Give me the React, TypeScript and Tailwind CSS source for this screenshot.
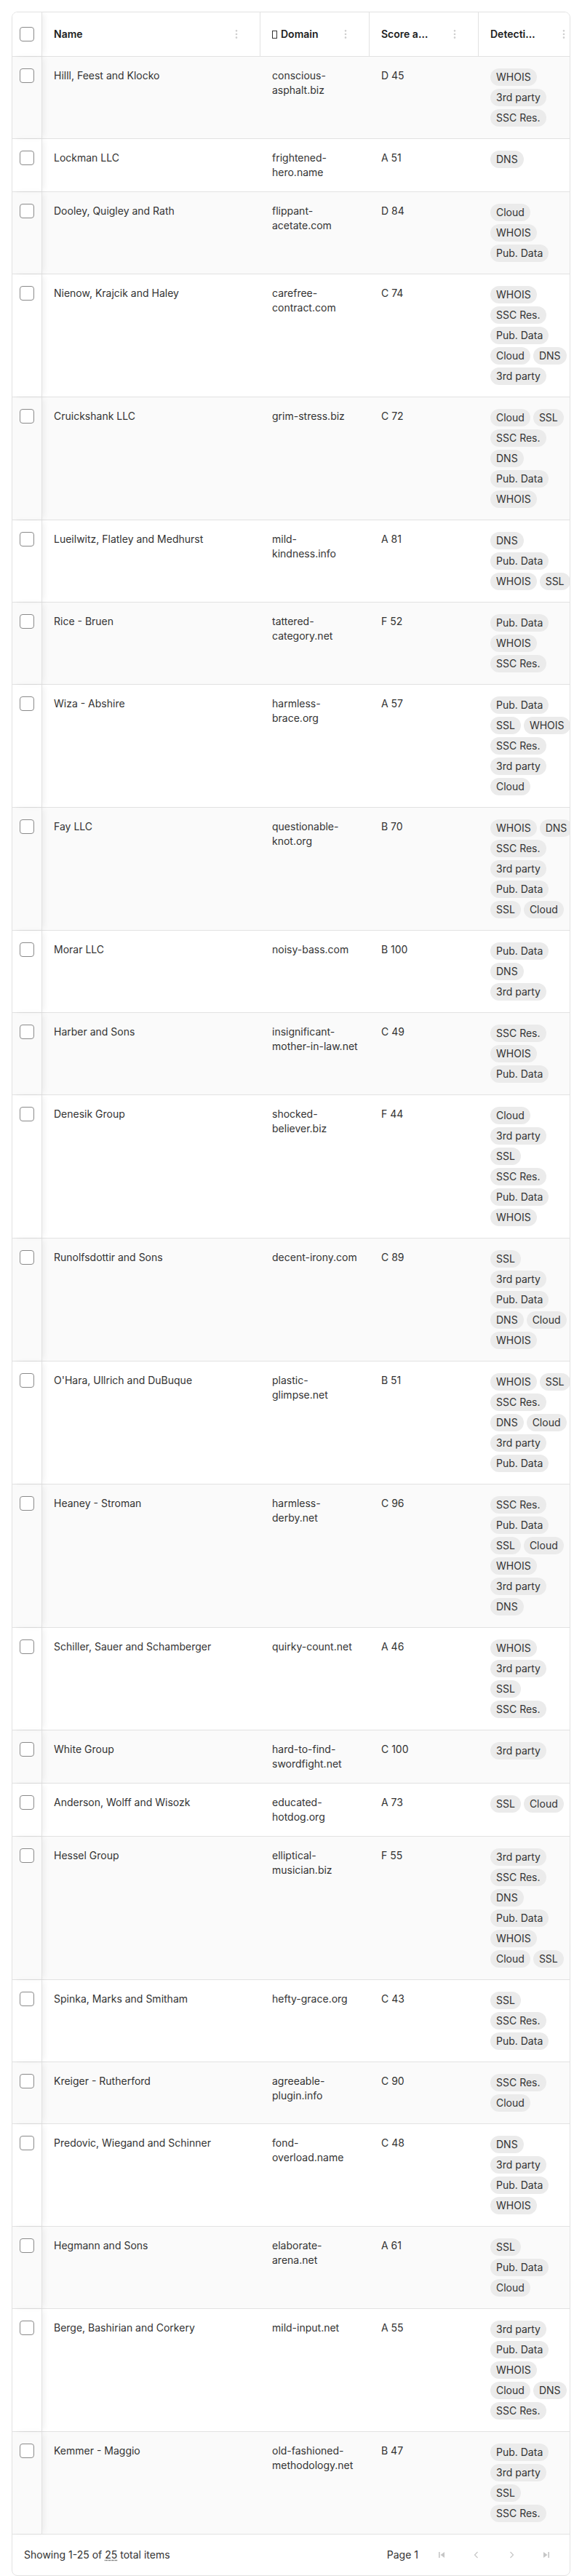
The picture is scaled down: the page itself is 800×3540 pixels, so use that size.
import { EllipsisVertical } from "lucide-react";

interface Company {
  name: string;
  domain: string;
  score: string;
  tags: string[];
}

const companies: Company[] = [
  { name: "Hilll, Feest and Klocko", domain: "conscious-asphalt.biz", score: "D 45", tags: ["WHOIS", "3rd party", "SSC Res."] },
  { name: "Lockman LLC", domain: "frightened-hero.name", score: "A 51", tags: ["DNS"] },
  { name: "Dooley, Quigley and Rath", domain: "flippant-acetate.com", score: "D 84", tags: ["Cloud", "WHOIS", "Pub. Data"] },
  { name: "Nienow, Krajcik and Haley", domain: "carefree-contract.com", score: "C 74", tags: ["WHOIS", "SSC Res.", "Pub. Data", "Cloud", "DNS", "3rd party"] },
  { name: "Cruickshank LLC", domain: "grim-stress.biz", score: "C 72", tags: ["Cloud", "SSL", "SSC Res.", "DNS", "Pub. Data", "WHOIS"] },
  { name: "Lueilwitz, Flatley and Medhurst", domain: "mild-kindness.info", score: "A 81", tags: ["DNS", "Pub. Data", "WHOIS", "SSL"] },
  { name: "Rice - Bruen", domain: "tattered-category.net", score: "F 52", tags: ["Pub. Data", "WHOIS", "SSC Res."] },
  { name: "Wiza - Abshire", domain: "harmless-brace.org", score: "A 57", tags: ["Pub. Data", "SSL", "WHOIS", "SSC Res.", "3rd party", "Cloud"] },
  { name: "Fay LLC", domain: "questionable-knot.org", score: "B 70", tags: ["WHOIS", "DNS", "SSC Res.", "3rd party", "Pub. Data", "SSL", "Cloud"] },
  { name: "Morar LLC", domain: "noisy-bass.com", score: "B 100", tags: ["Pub. Data", "DNS", "3rd party"] },
  { name: "Harber and Sons", domain: "insignificant-mother-in-law.net", score: "C 49", tags: ["SSC Res.", "WHOIS", "Pub. Data"] },
  { name: "Denesik Group", domain: "shocked-believer.biz", score: "F 44", tags: ["Cloud", "3rd party", "SSL", "SSC Res.", "Pub. Data", "WHOIS"] },
  { name: "Runolfsdottir and Sons", domain: "decent-irony.com", score: "C 89", tags: ["SSL", "3rd party", "Pub. Data", "DNS", "Cloud", "WHOIS"] },
  { name: "O'Hara, Ullrich and DuBuque", domain: "plastic-glimpse.net", score: "B 51", tags: ["WHOIS", "SSL", "SSC Res.", "DNS", "Cloud", "3rd party", "Pub. Data"] },
  { name: "Heaney - Stroman", domain: "harmless-derby.net", score: "C 96", tags: ["SSC Res.", "Pub. Data", "SSL", "Cloud", "WHOIS", "3rd party", "DNS"] },
  { name: "Schiller, Sauer and Schamberger", domain: "quirky-count.net", score: "A 46", tags: ["WHOIS", "3rd party", "SSL", "SSC Res."] },
  { name: "White Group", domain: "hard-to-find-swordfight.net", score: "C 100", tags: ["3rd party"] },
  { name: "Anderson, Wolff and Wisozk", domain: "educated-hotdog.org", score: "A 73", tags: ["SSL", "Cloud"] },
  { name: "Hessel Group", domain: "elliptical-musician.biz", score: "F 55", tags: ["3rd party", "SSC Res.", "DNS", "Pub. Data", "WHOIS", "Cloud", "SSL"] },
  { name: "Spinka, Marks and Smitham", domain: "hefty-grace.org", score: "C 43", tags: ["SSL", "SSC Res.", "Pub. Data"] },
  { name: "Kreiger - Rutherford", domain: "agreeable-plugin.info", score: "C 90", tags: ["SSC Res.", "Cloud"] },
  { name: "Predovic, Wiegand and Schinner", domain: "fond-overload.name", score: "C 48", tags: ["DNS", "3rd party", "Pub. Data", "WHOIS"] },
  { name: "Hegmann and Sons", domain: "elaborate-arena.net", score: "A 61", tags: ["SSL", "Pub. Data", "Cloud"] },
  { name: "Berge, Bashirian and Corkery", domain: "mild-input.net", score: "A 55", tags: ["3rd party", "Pub. Data", "WHOIS", "Cloud", "DNS", "SSC Res."] },
  { name: "Kemmer - Maggio", domain: "old-fashioned-methodology.net", score: "B 47", tags: ["Pub. Data", "3rd party", "SSL", "SSC Res."] },
];

const Checkbox = () => (
  <span className="block w-5 h-5 rounded-[4px] border border-[#8a8a8a] bg-white" />
);

const HeaderCell = ({
  children,
  width,
  textClass = "",
}: {
  children: React.ReactNode;
  width: string;
  textClass?: string;
}) => (
  <div
    className={`${width} shrink-0 h-[60px] flex items-center pl-4 pr-6 border-r border-[#e2e2e2]`}
  >
    <div className="flex-1 min-w-0 flex items-center">
      <span className={`truncate font-semibold text-[#1c1c1c] ${textClass}`}>
        {children}
      </span>
    </div>
    <EllipsisVertical size={16} strokeWidth={2} className="text-[#cfcfcf] shrink-0" />
  </div>
);

const PagerIcon = ({ kind }: { kind: "first" | "prev" | "next" | "last" }) => (
  <button className="w-8 h-8 flex items-center justify-center text-[#c6c6c6]">
    <svg width="12" height="12" viewBox="0 0 12 12" fill="currentColor">
      {kind === "first" && (
        <>
          <rect x="2" y="2" width="1.6" height="8" />
          <polygon points="10,2 10,10 4.5,6" />
        </>
      )}
      {kind === "last" && (
        <>
          <rect x="8.4" y="2" width="1.6" height="8" />
          <polygon points="2,2 2,10 7.5,6" />
        </>
      )}
      {kind === "prev" && (
        <polyline points="7.5,2 3.5,6 7.5,10" fill="none" stroke="currentColor" strokeWidth="1.2" />
      )}
      {kind === "next" && (
        <polyline points="4.5,2 8.5,6 4.5,10" fill="none" stroke="currentColor" strokeWidth="1.2" />
      )}
    </svg>
  </button>
);

export default function App() {
  return (
    <div className="p-4 bg-white font-[Inter,sans-serif] text-sm text-[#333]">
      <div className="border border-[#e2e2e2] rounded-lg overflow-hidden bg-white">
        <div className="w-[791px]">
          {/* header */}
          <div className="flex border-b border-[#e2e2e2] bg-white">
            <div className="w-[41px] shrink-0 h-[60px] flex items-center justify-center border-r border-[#e2e2e2] relative z-10 shadow-[4px_0_8px_-2px_rgba(0,0,0,0.07)] bg-white">
              <Checkbox />
            </div>
            <HeaderCell width="w-[300px]">Name</HeaderCell>
            <HeaderCell width="w-[150px]">
              <span className="inline-block align-[-1px] w-[7px] h-[11px] border border-[#333] mr-[5px]" />
              Domain
            </HeaderCell>
            <HeaderCell width="w-[150px]" textClass="max-w-[70px]">
              Score and grade
            </HeaderCell>
            <HeaderCell width="w-[150px]" textClass="max-w-[64px]">
              Detection types
            </HeaderCell>
          </div>

          {/* rows */}
          {companies.map((c, i) => (
            <div
              key={c.name}
              className={`flex border-b border-[#e2e2e2] ${i % 2 === 0 ? "bg-[#fafafa]" : "bg-white"}`}
            >
              <div className="w-[41px] shrink-0 flex justify-center pt-4 border-r border-[#e2e2e2] relative z-10 shadow-[4px_0_8px_-2px_rgba(0,0,0,0.07)]">
                <Checkbox />
              </div>
              <div className="w-[300px] shrink-0 px-4 py-4 leading-5">{c.name}</div>
              <div className="w-[150px] shrink-0 px-4 py-4 leading-5">{c.domain}</div>
              <div className="w-[150px] shrink-0 px-4 py-4 leading-5">{c.score}</div>
              <div className="w-[150px] shrink-0 px-4 py-4">
                <div className="flex flex-wrap gap-1">
                  {c.tags.map((t) => (
                    <span
                      key={t}
                      className="h-6 px-2 rounded-full bg-[#ebebeb] text-[#333] leading-6 whitespace-nowrap"
                    >
                      {t}
                    </span>
                  ))}
                </div>
              </div>
            </div>
          ))}
        </div>

        {/* footer */}
        <div className="h-14 flex items-center justify-between px-4 text-[#333]">
          <span>
            Showing 1-25 of{" "}
            <abbr className="underline decoration-dotted underline-offset-2" title="25">
              25
            </abbr>{" "}
            total items
          </span>
          <div className="flex items-center gap-4">
            <span>Page 1</span>
            <PagerIcon kind="first" />
            <PagerIcon kind="prev" />
            <PagerIcon kind="next" />
            <PagerIcon kind="last" />
          </div>
        </div>
      </div>
    </div>
  );
}
